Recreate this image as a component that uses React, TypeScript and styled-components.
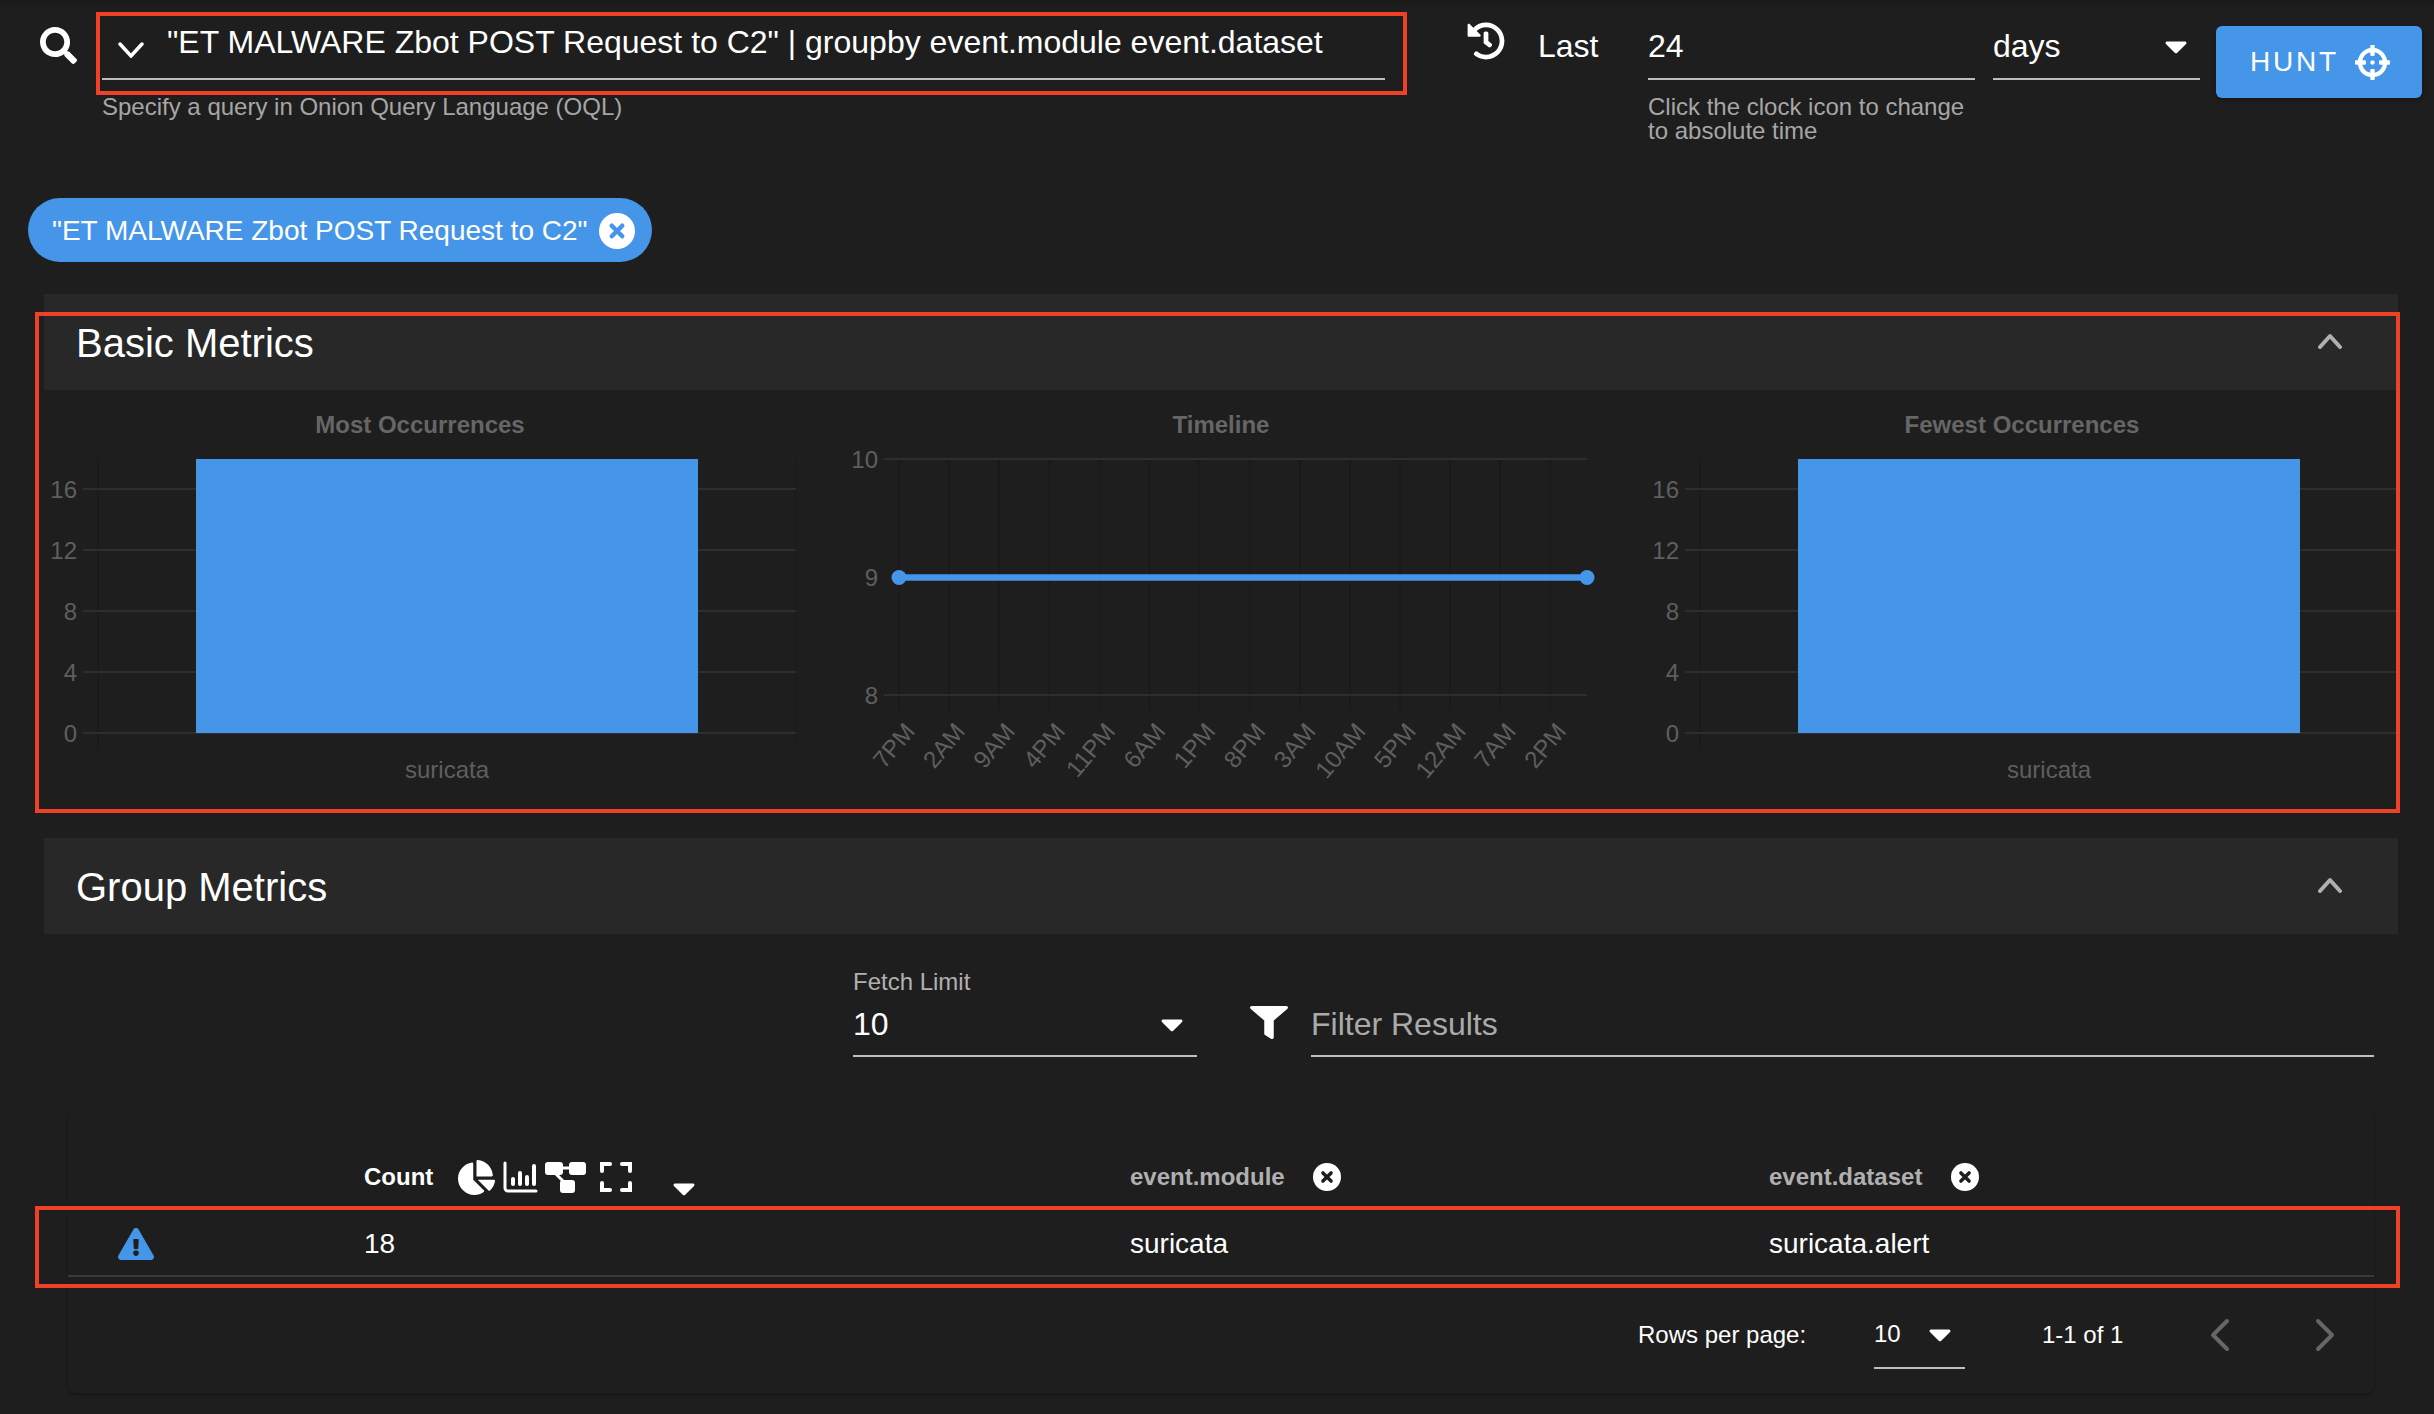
import React, { FC } from 'react';
import styled, { createGlobalStyle } from 'styled-components';
import { FaCaretDown, FaChartPie, FaCrosshairs, FaExclamationTriangle, FaFilter, FaHistory, FaSearch } from 'react-icons/fa';

const BLUE = '#4596e9';
const FONT = '"Liberation Sans", Arial, sans-serif';

const GlobalStyle = createGlobalStyle`
  html, body {
    margin: 0;
    padding: 0;
    background: #1e1e1e;
  }
`;

const Page = styled.div`
  position: relative;
  width: 2434px;
  height: 1414px;
  overflow: hidden;
  background: linear-gradient(180deg, #191919 0, #1e1e1e 8px);
  color: #fff;
  font-family: ${FONT};
`;

/* Top search bar */
const TopBar = styled.div`
  display: flex;
  align-items: flex-start;
  height: 198px;
  padding-left: 40px;
  box-sizing: border-box;
`;

const SearchSlot = styled.div`
  width: 62px;
  height: 80px;
  padding-top: 27px;
  box-sizing: border-box;
  font-size: 37px;
  line-height: 0;
`;

const QueryField = styled.div`
  width: 1283px;
`;

const Underlined = styled.div`
  display: flex;
  align-items: center;
  height: 80px;
  box-sizing: border-box;
  border-bottom: 2px solid #bdbdbd;
  font-size: 32px;
`;

const QueryInput = styled(Underlined)`
  padding: 6px 0 0 15px;
  gap: 22px;
`;

const QueryChevron = styled.svg`
  flex: none;
  width: 28px;
  height: 16px;
  margin-top: 16px;
  fill: none;
  stroke: #fff;
  stroke-width: 3.5;
  stroke-linecap: round;
`;

const ValueInput = styled(Underlined)`
  padding-top: 14px;
`;

const Helper = styled.div`
  margin-top: 15px;
  font-size: 24px;
  line-height: 24px;
  color: #a6a6a6;
`;

const ClockSlot = styled.div`
  width: 37px;
  margin: 22px 34px 0 82px;
  font-size: 38px;
  line-height: 0;
`;

const LastLabel = styled.div`
  width: 110px;
  padding-top: 30px;
  font-size: 32px;
  line-height: 32px;
`;

const RangeField = styled.div`
  width: 327px;
  margin-right: 18px;
`;

const UnitField = styled.div`
  width: 207px;
  margin-right: 16px;
`;

const UnitInput = styled(ValueInput)`
  justify-content: space-between;
  padding-right: 6px;
`;

const Caret = styled(FaCaretDown)`
  flex: none;
  width: 36px;
  height: 36px;
  color: #fff;
`;

const HuntButton = styled.button`
  display: flex;
  align-items: center;
  gap: 16px;
  width: 206px;
  height: 72px;
  margin-top: 26px;
  padding: 0 0 0 34px;
  border: 0;
  border-radius: 6px;
  background: ${BLUE};
  color: #fff;
  font-family: ${FONT};
  font-size: 28px;
  letter-spacing: 2.8px;
  box-shadow: 0 2px 4px rgba(0, 0, 0, 0.3);
  svg {
    font-size: 35px;
  }
`;

/* Query chip */
const ChipRow = styled.div`
  height: 64px;
`;

const Chip = styled.div`
  display: inline-flex;
  align-items: center;
  gap: 12px;
  height: 64px;
  margin-left: 28px;
  padding: 1px 17px 0 24px;
  box-sizing: border-box;
  border-radius: 32px;
  background: ${BLUE};
  font-size: 28px;
  vertical-align: top;
`;

const RemoveSvg = styled.svg<{ $size: number; $glyph: string }>`
  flex: none;
  width: ${(p) => p.$size}px;
  height: ${(p) => p.$size}px;
  circle {
    fill: #fff;
  }
  path {
    fill: none;
    stroke: ${(p) => p.$glyph};
    stroke-width: 3;
    stroke-linecap: round;
  }
`;

const RemoveIcon: FC<{ size: number; glyph: string }> = ({ size, glyph }) => (
  <RemoveSvg viewBox="0 0 24 24" $size={size} $glyph={glyph}>
    <circle cx={12} cy={12} r={12} />
    <path d="M8.5 8.5l7 7M15.5 8.5l-7 7" />
  </RemoveSvg>
);

/* Collapsible sections */
const Section = styled.section`
  margin: 0 36px 0 44px;
`;

const BasicSection = styled(Section)`
  margin-top: 32px;
`;

const SectionHeader = styled.header`
  display: flex;
  align-items: center;
  justify-content: space-between;
  height: 96px;
  padding: 2px 56px 0 32px;
  box-sizing: border-box;
  background: #282828;
  font-size: 40px;
  color: #fff;
`;

const CollapseIcon = styled.svg`
  width: 24px;
  height: 16px;
  margin-top: -4px;
  fill: none;
  stroke: #b0b0b0;
  stroke-width: 4;
  stroke-linecap: round;
  stroke-linejoin: round;
`;

const ChartGrid = styled.div`
  display: grid;
  grid-template-columns: repeat(3, 752px);
  column-gap: 49px;
  height: 448px;
`;

const ChartColumn = styled.div`
  padding-top: 19px;
`;

const ChartTitle = styled.div`
  height: 31px;
  font-size: 24px;
  font-weight: 700;
  line-height: 32px;
  text-align: center;
  color: #666;
`;

const ChartSvg = styled.svg`
  display: block;
  width: 752px;
  height: 370px;
`;

const AxisText = styled.text`
  font-family: ${FONT};
  font-size: 24px;
  fill: #5f5f5f;
`;

const GridLine = styled.line`
  stroke: #2e2e2e;
  stroke-width: 2;
`;

const AxisLine = styled.line`
  stroke: #1a1a1a;
  stroke-width: 1.5;
`;

const BAR_TICKS = [
  { label: '16', y: 49 },
  { label: '12', y: 110 },
  { label: '8', y: 171 },
  { label: '4', y: 232 },
  { label: '0', y: 293 },
];

const HOURS = ['7PM', '2AM', '9AM', '4PM', '11PM', '6AM', '1PM', '8PM', '3AM', '10AM', '5PM', '12AM', '7AM', '2PM'];

const BarChart: FC = () => (
  <ChartSvg viewBox="0 0 752 370">
    <AxisLine x1={54} y1={19} x2={54} y2={308} />
    <AxisLine x1={752} y1={19} x2={752} y2={308} />
    {BAR_TICKS.map((tick) => (
      <g key={tick.label}>
        <GridLine x1={39} y1={tick.y} x2={752} y2={tick.y} />
        <AxisText x={33} y={tick.y + 9} textAnchor="end">
          {tick.label}
        </AxisText>
      </g>
    ))}
    <rect x={152} y={19} width={502} height={274} fill={BLUE} />
    <AxisText x={403} y={338} textAnchor="middle">
      suricata
    </AxisText>
  </ChartSvg>
);

const TimelineChart: FC = () => (
  <ChartSvg viewBox="0 0 752 370">
    {HOURS.map((hour, i) => {
      const x = 54 + i * 50.1;
      return (
        <g key={hour + i}>
          <AxisLine x1={x} y1={19} x2={x} y2={270} />
          <AxisText textAnchor="end" transform={`translate(${x + 17} 292) rotate(-50)`}>
            {hour}
          </AxisText>
        </g>
      );
    })}
    {[
      { label: '10', y: 19 },
      { label: '9', y: 137 },
      { label: '8', y: 255 },
    ].map((tick) => (
      <g key={tick.label}>
        {tick.label !== '9' && <GridLine x1={39} y1={tick.y} x2={742} y2={tick.y} />}
        <AxisText x={33} y={tick.y + 9} textAnchor="end">
          {tick.label}
        </AxisText>
      </g>
    ))}
    <line x1={54} y1={137.5} x2={742} y2={137.5} stroke={BLUE} strokeWidth={6.5} />
    <circle cx={54} cy={137.5} r={7.5} fill={BLUE} />
    <circle cx={742} cy={137.5} r={7.5} fill={BLUE} />
  </ChartSvg>
);

/* Group metrics controls */
const FilterRow = styled.div`
  display: flex;
  align-items: flex-end;
  height: 123px;
  padding-left: 809px;
`;

const FetchField = styled.div`
  width: 344px;
  margin-right: 53px;
`;

const FieldLabel = styled.div`
  font-size: 24px;
  line-height: 30px;
  color: #b0b0b0;
`;

const FetchInput = styled(Underlined)`
  justify-content: space-between;
  height: 60px;
  padding: 0 7px 4px 0;
`;

const FilterSlot = styled.div`
  width: 38px;
  margin: 0 23px 18px 0;
  line-height: 0;
  svg {
    width: 38px;
    height: 33px;
  }
`;

const FilterInput = styled(Underlined)`
  width: 1063px;
  height: 60px;
  padding-bottom: 4px;
  color: #aaa;
`;

/* Results table */
const TableCard = styled.div`
  width: 2306px;
  height: 282px;
  margin: 54px 0 0 68px;
  padding-top: 31px;
  box-sizing: border-box;
  border-radius: 0 0 8px 8px;
  box-shadow: 0 2px 3px rgba(0, 0, 0, 0.25);
`;

const TableGrid = styled.div`
  display: grid;
  grid-template-columns: 296px 766px 639px 1fr;
  align-items: center;
`;

const HeaderRow = styled(TableGrid)`
  height: 70px;
`;

const BodyRow = styled(TableGrid)`
  height: 65px;
  border-bottom: 2px solid #3a3a3a;
  box-sizing: border-box;
  font-size: 28px;
`;

const AlertCell = styled.div`
  padding-left: 50px;
  font-size: 36px;
  line-height: 0;
  color: ${BLUE};
`;

const HeaderCell = styled.div<{ $muted?: boolean; $gap?: number }>`
  display: flex;
  align-items: center;
  gap: ${(p) => p.$gap ?? 0}px;
  font-size: 24px;
  font-weight: 700;
  color: ${(p) => (p.$muted ? '#b0b0b0' : '#fff')};
`;

const GroupIcons = styled.div`
  display: flex;
  align-items: center;
  margin-left: 25px;
  color: #fff;
  line-height: 0;
`;

const PieSlot = styled.span`
  margin-right: 8px;
`;

const TreeSvg = styled.svg`
  width: 41px;
  height: 32px;
  margin: 0 14px 0 7px;
  rect {
    fill: #fff;
  }
  path {
    fill: none;
    stroke: #fff;
    stroke-width: 3;
  }
`;

const SortCaret = styled(Caret)`
  margin: 22px 0 0 34px;
`;

const TableFooter = styled.div`
  display: flex;
  align-items: center;
  height: 116px;
  padding-left: 1570px;
  font-size: 24px;
  & > * {
    flex: none;
  }
`;

const RowsLabel = styled.div`
  width: 236px;
`;

const RowsSelect = styled.div`
  display: flex;
  align-items: center;
  justify-content: space-between;
  width: 91px;
  height: 68px;
  margin-right: 77px;
  padding-right: 7px;
  box-sizing: border-box;
  border-bottom: 2px solid #bdbdbd;
`;

const RangeText = styled.div`
  width: 168px;
`;

const PageArrow = styled.svg`
  width: 20px;
  height: 34px;
  margin-right: 85px;
  fill: none;
  stroke: #666;
  stroke-width: 4;
  stroke-linecap: round;
  stroke-linejoin: round;
  &:last-child {
    margin-right: 0;
  }
`;

/* Red annotation frames lying over the screenshot */
const Highlight = styled.div`
  position: absolute;
  box-sizing: border-box;
  border: 4px solid #ee4128;
  pointer-events: none;
`;

const QueryHighlight = styled(Highlight)`
  left: 96px;
  top: 12px;
  width: 1311px;
  height: 83px;
`;

const MetricsHighlight = styled(Highlight)`
  left: 35px;
  top: 312px;
  width: 2365px;
  height: 501px;
`;

const RowHighlight = styled(Highlight)`
  left: 35px;
  top: 1206px;
  width: 2365px;
  height: 82px;
`;

const ChevronUp = () => (
  <CollapseIcon viewBox="0 0 24 16">
    <polyline points="2,14 12,3 22,14" />
  </CollapseIcon>
);

const BarsIcon = () => (
  <svg width={35} height={32} viewBox="0 0 35 32" fill="none" stroke="#fff" strokeLinecap="round" strokeWidth={3}>
    <path d="M2 2v25a3 3 0 0 0 3 3h28" />
    <path d="M10 18v5M17 12v11M24 16v7M31 5v18" strokeWidth={4} />
  </svg>
);

const TreeIcon = () => (
  <TreeSvg viewBox="0 0 41 32">
    <path d="M16 7h10M10 12l10 10" />
    <rect x={0} y={1} width={18} height={13} rx={3} />
    <rect x={24} y={1} width={17} height={13} rx={3} />
    <rect x={15} y={19} width={15} height={13} rx={3} />
  </TreeSvg>
);

const ExpandIcon = () => (
  <svg width={32} height={30} viewBox="0 0 32 30" fill="none" stroke="#fff" strokeLinecap="round" strokeWidth={4}>
    <path d="M2 9V2h8M22 2h8v7M30 21v7h-8M10 28H2v-7" />
  </svg>
);

const App: FC = () => (
  <Page>
    <GlobalStyle />
    <TopBar>
      <SearchSlot>
        <FaSearch />
      </SearchSlot>
      <QueryField>
        <QueryInput>
          <QueryChevron viewBox="0 0 28 16">
            <polyline points="3,2 14,14 25,2" />
          </QueryChevron>
          <span>"ET MALWARE Zbot POST Request to C2" | groupby event.module event.dataset</span>
        </QueryInput>
        <Helper>Specify a query in Onion Query Language (OQL)</Helper>
      </QueryField>
      <ClockSlot>
        <FaHistory />
      </ClockSlot>
      <LastLabel>Last</LastLabel>
      <RangeField>
        <ValueInput>24</ValueInput>
        <Helper>
          Click the clock icon to change
          <br />
          to absolute time
        </Helper>
      </RangeField>
      <UnitField>
        <UnitInput>
          days
          <Caret />
        </UnitInput>
      </UnitField>
      <HuntButton>
        HUNT
        <FaCrosshairs />
      </HuntButton>
    </TopBar>

    <ChipRow>
      <Chip>
        "ET MALWARE Zbot POST Request to C2"
        <RemoveIcon size={36} glyph={BLUE} />
      </Chip>
    </ChipRow>

    <BasicSection>
      <SectionHeader>
        Basic Metrics
        <ChevronUp />
      </SectionHeader>
      <ChartGrid>
        <ChartColumn>
          <ChartTitle>Most Occurrences</ChartTitle>
          <BarChart />
        </ChartColumn>
        <ChartColumn>
          <ChartTitle>Timeline</ChartTitle>
          <TimelineChart />
        </ChartColumn>
        <ChartColumn>
          <ChartTitle>Fewest Occurrences</ChartTitle>
          <BarChart />
        </ChartColumn>
      </ChartGrid>
    </BasicSection>

    <Section>
      <SectionHeader>
        Group Metrics
        <ChevronUp />
      </SectionHeader>
      <FilterRow>
        <FetchField>
          <FieldLabel>Fetch Limit</FieldLabel>
          <FetchInput>
            10
            <Caret />
          </FetchInput>
        </FetchField>
        <FilterSlot>
          <FaFilter preserveAspectRatio="none" />
        </FilterSlot>
        <FilterInput>Filter Results</FilterInput>
      </FilterRow>
    </Section>

    <TableCard>
      <HeaderRow>
        <div />
        <HeaderCell>
          Count
          <GroupIcons>
            <PieSlot>
              <FaChartPie size={37} />
            </PieSlot>
            <BarsIcon />
            <TreeIcon />
            <ExpandIcon />
          </GroupIcons>
          <SortCaret />
        </HeaderCell>
        <HeaderCell $muted $gap={28}>
          event.module
          <RemoveIcon size={28} glyph="#1e1e1e" />
        </HeaderCell>
        <HeaderCell $muted $gap={29}>
          event.dataset
          <RemoveIcon size={28} glyph="#1e1e1e" />
        </HeaderCell>
      </HeaderRow>
      <BodyRow>
        <AlertCell>
          <FaExclamationTriangle />
        </AlertCell>
        <div>18</div>
        <div>suricata</div>
        <div>suricata.alert</div>
      </BodyRow>
      <TableFooter>
        <RowsLabel>Rows per page:</RowsLabel>
        <RowsSelect>
          10
          <Caret />
        </RowsSelect>
        <RangeText>1-1 of 1</RangeText>
        <PageArrow viewBox="0 0 20 34">
          <polyline points="17,3 3,17 17,31" />
        </PageArrow>
        <PageArrow viewBox="0 0 20 34">
          <polyline points="3,3 17,17 3,31" />
        </PageArrow>
      </TableFooter>
    </TableCard>

    <QueryHighlight />
    <MetricsHighlight />
    <RowHighlight />
  </Page>
);

export default App;
